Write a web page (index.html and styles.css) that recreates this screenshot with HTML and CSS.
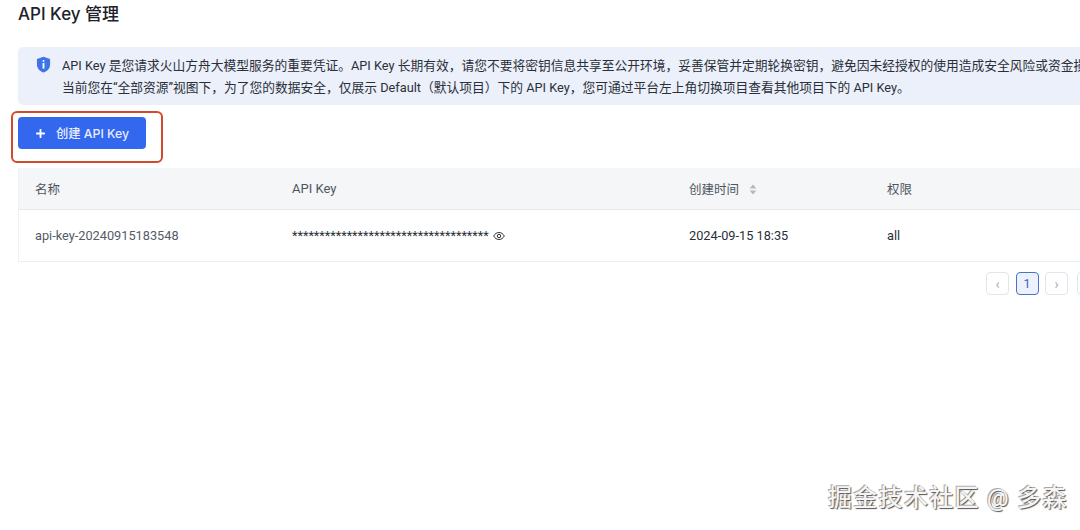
FILE: index.html
```html
<!DOCTYPE html>
<html lang="zh-CN">
<head>
  <meta charset="UTF-8">
  <title>API Key 管理</title>
  <link rel="stylesheet" href="styles.css">
</head>
<body>

<div class="page">
  <h1 class="title">API Key 管理</h1>

  <div class="alert">
    <svg class="alert-icon" width="15" height="17" viewBox="0 0 16 18">
      <path d="M8 .6 15 3v6.200c0 4-3 6.800-7 8.200-4-1.400-7-4.200-7-8.200V3z" fill="#3f74e8"/>
      <rect x="7" y="4.200" width="2" height="2" rx="1" fill="#fff"/>
      <rect x="7" y="7.400" width="2" height="6" rx=".6" fill="#fff"/>
    </svg>
    <div class="alert-text">
      <p>API Key 是您请求火山方舟大模型服务的重要凭证。API Key 长期有效，请您不要将密钥信息共享至公开环境，妥善保管并定期轮换密钥，避免因未经授权的使用造成安全风险或资金损失。</p>
      <p>当前您在“全部资源”视图下，为了您的数据安全，仅展示 Default（默认项目）下的 API Key，您可通过平台左上角切换项目查看其他项目下的 API Key。</p>
    </div>
  </div>

  <div class="toolbar">
    <button class="btn-create">
      <svg width="9" height="9" viewBox="0 0 10 10"><path d="M5 .8v8.400M.8 5h8.400" stroke="#fff" stroke-width="2" stroke-linecap="round"/></svg>
      <span>创建 API Key</span>
    </button>
    <div class="highlight"></div>
  </div>

  <table class="key-table">
    <thead>
      <tr>
        <th class="col-name">名称</th>
        <th class="col-key">API Key</th>
        <th class="col-time">
          创建时间
          <svg class="sort" width="8" height="13" viewBox="0 0 9 13"><path d="M4.500 .8 8.300 5.400H.7zM4.500 12.200.7 7.600h7.600z" fill="#b4b8bf"/></svg>
        </th>
        <th class="col-perm">权限</th>
      </tr>
    </thead>
    <tbody>
      <tr>
        <td class="cell-name">api-key-20240915183548</td>
        <td>
          <span class="stars">************************************</span>
          <svg class="eye" width="12" height="12" viewBox="0 0 12 12" fill="none" stroke="#333" stroke-width="1">
            <path d="M.7 6C2 3.700 3.800 2.500 6 2.500s4 1.200 5.300 3.500C10 8.300 8.200 9.500 6 9.500S2 8.300.7 6z"/>
            <circle cx="6" cy="6" r="1.700"/>
          </svg>
        </td>
        <td>2024-09-15 18:35</td>
        <td>all</td>
      </tr>
    </tbody>
  </table>

  <div class="pager">
    <span class="pg-btn pg-arrow">‹</span>
    <span class="pg-btn pg-current">1</span>
    <span class="pg-btn pg-arrow">›</span>
    <span class="pg-btn pg-more"></span>
  </div>
</div>

<div class="watermark">掘金技术社区 @ 多森</div>

</body>
</html>
```

FILE: styles.css
```css
html, body {
  margin: 0;
  padding: 0;
  height: 530px;
  overflow: hidden;
  background-color: #fff;
}
body {
  font-family: Roboto, "Noto Sans CJK SC", sans-serif;
  color: #1d2129;
  position: relative;
}
.page {
  width: 1400px;
  padding: 3px 0 0 18px;
}
.title {
  margin: 0;
  font-family: Inter, "Noto Sans CJK SC", sans-serif;
  font-size: 17px;
  line-height: 22px;
  font-weight: 500;
}
.alert {
  display: flex;
  gap: 11px;
  margin-top: 22px;
  padding: 8px 0 8px 18px;
  height: 42px;
  background-color: #ebf0fb;
  border-radius: 5px;
}
.alert-icon {
  margin-top: 1px;
  flex-shrink: 0;
}
.alert-text {
  font-size: 12.750px;
  line-height: 21.500px;
  color: #2a2f38;
  white-space: nowrap;
}
.alert-text p {
  margin: 0;
}
.toolbar {
  position: relative;
  margin-top: 12px;
  height: 32px;
}
.btn-create {
  display: flex;
  align-items: center;
  gap: 11px;
  width: 128px;
  height: 32px;
  padding: 0 0 0 18px;
  border: none;
  border-radius: 4px;
  background-color: #3368ee;
  color: #e8eefc;
  font-family: Inter, "Noto Sans CJK SC", sans-serif;
  font-size: 12.300px;
  font-weight: 500;
}
.highlight {
  position: absolute;
  left: -7px;
  top: -6px;
  width: 152px;
  height: 52px;
  box-sizing: border-box;
  border: 2.500px solid #d2492b;
  border-radius: 6px;
}
.key-table {
  margin-top: 19px;
  width: 1400px;
  border-collapse: collapse;
  table-layout: fixed;
  font-size: 12.750px;
  border-left: 1px solid #f0f1f3;
}
.key-table th {
  height: 41px;
  padding: 0;
  text-align: left;
  font-size: 12.500px;
  font-weight: 400;
  color: #4e5560;
  background-color: #f5f6f8;
  border-bottom: 1px solid #e6e8eb;
}
.key-table th.col-key {
  font-size: 13px;
}
.key-table td {
  height: 51px;
  padding: 0;
  color: #2a2f38;
  border-bottom: 1px solid #eceef1;
}
.key-table .col-name, .key-table .cell-name {
  padding-left: 16px;
}
.key-table .cell-name {
  color: #555b66;
}
.col-name { width: 257px; }
.col-key { width: 397px; }
.col-time { width: 198px; }
.sort {
  margin-left: 7px;
  vertical-align: -2px;
}
.stars {
  font-size: 12.700px;
}
.eye {
  margin-left: 1px;
  vertical-align: -2px;
}
.pager {
  display: flex;
  gap: 6.500px;
  margin: 10px 0 0 968px;
}
.pg-btn {
  display: flex;
  align-items: center;
  justify-content: center;
  width: 21px;
  height: 21px;
  border: 1px solid #e3e5e9;
  border-radius: 4px;
  font-size: 12.500px;
}
.pg-arrow {
  color: #a9aeb6;
  font-size: 14px;
}
.pg-current {
  border-color: #4a72c9;
  background-color: #ecf1fb;
  color: #3c64bc;
}
.pg-more {
  margin-left: 2px;
}
.watermark {
  position: absolute;
  left: 828px;
  top: 483px;
  font-size: 24px;
  line-height: 30px;
  letter-spacing: 1.300px;
  font-weight: 500;
  color: #f4f4f4;
  text-shadow: 1px 1px 1px #555, -1px -1px 0 #aaa;
  white-space: nowrap;
}
```
